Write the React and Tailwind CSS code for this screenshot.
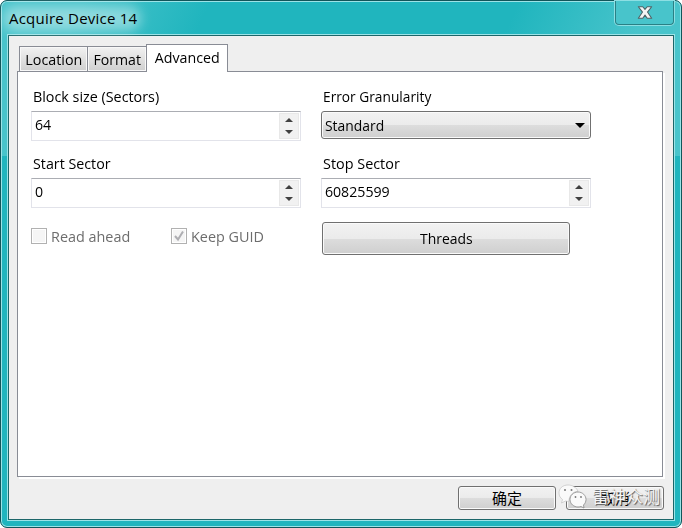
import React from "react";

const face = "bg-[linear-gradient(to_bottom,#f2f2f2_0%,#ebebeb_50%,#dddddd_50%,#cfcfcf_100%)]";
const button =
  "rounded-[3px] border border-[#707070] shadow-[inset_0_0_0_1px_#fafafa] flex items-center " + face;
const tab =
  "flex h-[26px] items-center justify-center border border-[#898c95] bg-linear-to-b from-[#f2f2f2] to-[#cfcfcf] shadow-[inset_0_0_0_1px_#f8f8f8]";

// Condensed run of text, anchored at its left edge unless told otherwise.
function T({ children, className }) {
  return <span className={"inline-block whitespace-nowrap " + className}>{children}</span>;
}

function Label({ children, scale }) {
  return (
    <div className="-mt-px h-5 pl-[2px] text-[15px] leading-5">
      <T className={"origin-left " + scale}>{children}</T>
    </div>
  );
}

function Arrow({ down }) {
  return (
    <svg width="8" height="4" viewBox="0 0 8 4" className={down ? "rotate-180" : ""}>
      <path d="M4 0L8 4H0Z" fill="#404040" />
    </svg>
  );
}

function Spinner({ value }) {
  return (
    <div className="flex h-[30px] w-[270px] justify-between border border-[#e2e3ea] border-t-[#abadb3] bg-white p-px">
      <T className="origin-left scale-x-[0.945] pl-[2px] text-[15px] leading-[22px]">{value}</T>
      <div className="flex w-5 flex-col items-center gap-[8px] border border-[#e8e8e8] bg-[#f1f1f1] pt-[4px]">
        <Arrow />
        <Arrow down />
      </div>
    </div>
  );
}

function Check({ checked, label }) {
  return (
    <div className="flex w-[140px] shrink-0 items-center gap-1 text-[15px] leading-5 text-[#6d6d6d]">
      <span className="flex size-4 items-center justify-center border border-[#b1b1b1] bg-[#f5f5f5] shadow-[inset_0_0_0_1px_#ffffff]">
        {checked && (
          <svg width="12" height="12" viewBox="0 0 12 12">
            <path d="M2 6L5 9.5L10 1.5" fill="none" stroke="#aeaeb2" strokeWidth="2" />
          </svg>
        )}
      </span>
      <T className="origin-left scale-x-[0.96]">{label}</T>
    </div>
  );
}

function WeChat() {
  return (
    <svg width="30" height="26" viewBox="0 0 30 26">
      <path d="M10 1C4.500 1 1 4.500 1 9C1 12 2.500 14 4.500 15.500L3.500 19L7.500 17C8.500 17.300 10 17.500 11 17.200C11 11.500 15 7.500 20 7.300C18.500 3.500 14.500 1 10 1Z" fill="#fafafa" stroke="#bbbbbb" strokeWidth=".6" />
      <path d="M20 8C15.500 8 12 11.500 12 15.500C12 20 16 23 20 23C21 23 22 22.800 23 22.500L26 24L25.500 21C27 19.800 28 17.500 28 15.500C28 11.500 24.500 8 20 8Z" fill="#fafafa" stroke="#888888" strokeWidth=".8" />
      <g fill="#777777">
        <circle cx="7" cy="6" r="1" />
        <circle cx="13.500" cy="6" r="1" />
        <circle cx="17.500" cy="13" r=".9" />
        <circle cx="23" cy="13" r=".9" />
      </g>
    </svg>
  );
}

export default function App() {
  return (
    <div className="h-[528px] w-[682px] overflow-hidden bg-white font-['Open_Sans','Noto_Sans_CJK_SC',sans-serif] text-black">
      <div className="relative flex h-full flex-col rounded-[7px] border border-[#11565a] bg-[#20b5be] bg-[linear-gradient(115deg,#48c4cb_0,#48c4cb_75px,#20b5be_190px,#20b5be_470px,#48c4cb_590px,#48c4cb_100%)] bg-[length:100%_155px] bg-no-repeat px-[6px] pb-[6px] shadow-[inset_0_0_0_1px_#9be3e7]">
        <div className="flex h-[33px] shrink-0 justify-between">
          <div className="relative pl-[2px] text-[15px] leading-[34px] whitespace-nowrap">
            <div className="absolute -inset-x-1 top-[5px] h-[25px] rounded-full bg-white/40 blur-[6px]" />
            <span className="relative tracking-[0.22px]">Acquire Device 14</span>
          </div>
          <div className="mr-px flex h-[24px] w-[59px] items-center justify-center rounded-b-[4px] border border-t-0 border-[#2a8085] bg-[#48c4cb] shadow-[0_0_0_1px_#8cdfe3]">
            <svg width="16" height="15" viewBox="0 0 18 15">
              <path d="M1.500 1H6.500L9 4L11.500 1H16.500L11.800 7L16.500 14H11.500L9 10.500L6.500 14H1.500L6.200 7Z" fill="#f4f4f4" stroke="#4d6266" strokeWidth="1.200" strokeLinejoin="round" />
            </svg>
          </div>
        </div>
        <div className="flex min-h-0 flex-1 flex-col border border-[#9be3e7]">
          <div className="flex min-h-0 flex-1 flex-col border border-[#1c6669] bg-[#efefef] pt-2 pr-[9px] pl-2">
            <div className="relative z-10 flex h-7 items-end pl-[2px] text-[15px]">
              <div className={tab + " w-[69px]"}><T className="scale-x-[0.955]">Location</T></div>
              <div className={tab + " w-[59px] border-l-0"}><T className="scale-x-[0.94]">Format</T></div>
              <div className="-ml-px flex h-7 w-[82px] items-center justify-center border border-b-0 border-[#898c95] bg-white pb-[2px]"><T className="scale-x-[0.95]">Advanced</T></div>
            </div>
            <div className="-mt-px h-[406px] w-[646px] shrink-0 border border-[#898c95] bg-white pt-[15px] pl-[13px] shadow-[2px_2px_0_#ffffff]">
              <div className="grid grid-cols-[270px_270px] gap-x-5">
                <div>
                  <Label scale="scale-x-[0.955]">Block size (Sectors)</Label>
                  <div className="mt-[5px]"><Spinner value="64" /></div>
                </div>
                <div>
                  <Label scale="scale-x-[0.915]">Error Granularity</Label>
                  <div className={button + " mt-[5px] h-7 justify-between pr-[5px] pl-[3px] text-[15px]"}>
                    <T className="origin-left scale-x-[0.925]">Standard</T>
                    <svg width="10" height="5" viewBox="0 0 10 5"><path d="M0 0H10L5 5Z" fill="#000000" /></svg>
                  </div>
                </div>
                <div className="mt-[13px]">
                  <Label scale="scale-x-[0.95]">Start Sector</Label>
                  <div className="mt-[5px]"><Spinner value="0" /></div>
                </div>
                <div className="mt-[13px]">
                  <Label scale="scale-x-[0.96]">Stop Sector</Label>
                  <div className="mt-[5px]"><Spinner value="60825599" /></div>
                </div>
                <div className="mt-[18px] flex h-5">
                  <Check label="Read ahead" />
                  <Check checked label="Keep GUID" />
                </div>
                <div className={button + " mt-[14px] ml-px h-[33px] w-[248px] justify-center text-[15px]"}><T className="scale-x-[0.93]">Threads</T></div>
              </div>
            </div>
            <div className="mt-[9px] flex justify-end gap-[10px] text-[15px]">
              <div className={button + " h-6 w-[98px] justify-center"}>确定</div>
              <div className={button + " relative h-6 w-[98px] justify-center"}>
                取消
                <div className="absolute -top-[3px] -left-[9px] flex items-center gap-1">
                  <WeChat />
                  <span className="text-[17px] leading-6 whitespace-nowrap text-[#f5f5f5] [text-shadow:1px_1px_1px_#555555]">雷神众测</span>
                </div>
              </div>
            </div>
          </div>
        </div>
      </div>
    </div>
  );
}
